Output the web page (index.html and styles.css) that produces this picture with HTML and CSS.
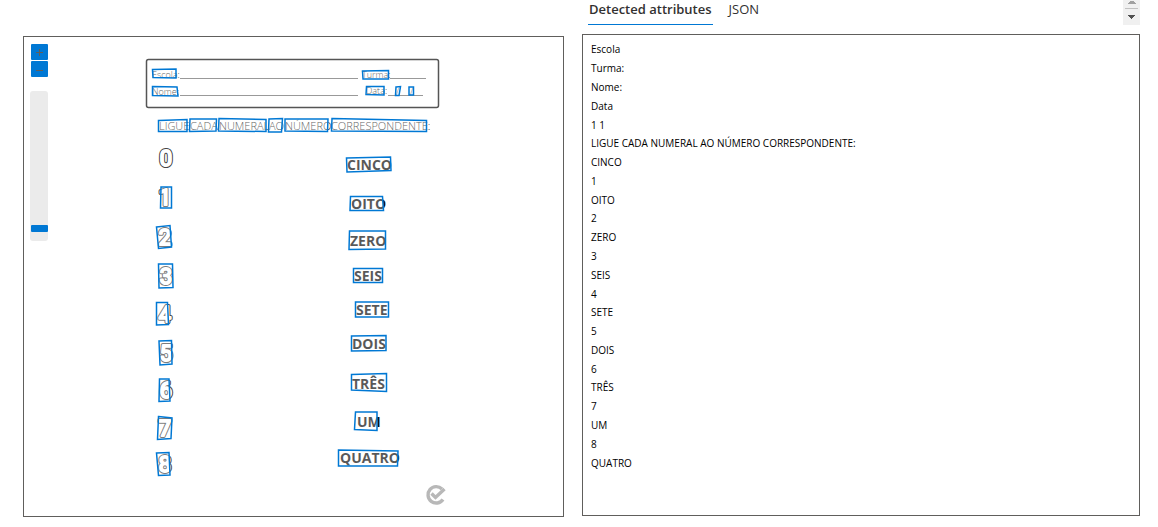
FILE: index.html
```html
<!DOCTYPE html>
<html lang="pt">
<head>
<meta charset="utf-8">
<title>Detected attributes</title>
<link rel="stylesheet" href="styles.css">
</head>
<body>
<main class="layout">
  <section class="viewer" aria-label="Document">
    <div class="controls">
      <div class="zoom">
        <button type="button" aria-label="Zoom in"><svg viewBox="0 0 17 16"><path d="M5 8.500h7M8.500 5v7"/></svg></button>
        <button type="button" aria-label="Zoom out"><svg viewBox="0 0 17 16"><path d="M5 9.500h7"/></svg></button>
      </div>
      <input class="slider" type="range" min="0" max="100" value="6" aria-label="Zoom level">
    </div>
    <svg class="sheet" viewBox="60 37 503 479" role="img" aria-label="Worksheet">
      <defs>
        <g id="digits">
          <text x="166" y="166">0</text><text x="165" y="205">1</text><text x="165" y="245">2</text>
          <text x="166" y="284">3</text><text x="165" y="322">4</text><text x="166" y="361">5</text>
          <text x="166" y="398">6</text><text x="165" y="436">7</text><text x="165" y="472">8</text>
        </g>
      </defs>
      <rect class="frame" x="146.500" y="59.500" width="292" height="48" rx="2"/>
      <path class="rule" d="M180 78.500H358M390 78.500H426M180 95.500H358M388 95.500H423"/>
      <g class="field">
        <text x="152" y="78">Escola:</text><text x="362" y="78">Turma:</text>
        <text x="152" y="95">Nome:</text><text x="366" y="94">Data:</text>
        <text x="396" y="95">/</text><text x="410" y="95">/</text>
      </g>
      <g class="heading">
        <text x="159" y="130">LIGUE</text><text x="190" y="130">CADA</text><text x="219" y="130">NUMERAL</text>
        <text x="269" y="130">AO</text><text x="285" y="130">NÚMERO</text><text x="331" y="130">CORRESPONDENTE:</text>
      </g>
      <use href="#digits" class="digit outline"/>
      <use href="#digits" class="digit inside"/>
      <g class="word">
        <text x="347" y="170">CINCO</text><text x="351" y="209">OITO</text><text x="350" y="246">ZERO</text>
        <text x="354" y="281">SEIS</text><text x="356" y="315">SETE</text><text x="352" y="349">DOIS</text>
        <text x="352" y="389">TRÊS</text><text x="357" y="427">UM</text><text x="340" y="463">QUATRO</text>
      </g>
      <g class="box">
        <path d="M152.500 69.500L176 69V78L153 77.500Z"/>
        <path d="M152.500 86.500L177 87L178 96L152.500 95.500Z"/>
        <path d="M362.500 71L388.500 70.500V79H363Z"/>
        <path d="M366.500 86.500H384V95L366 94.500Z"/>
        <path d="M396 87L400.500 86.500L399 95.500H395.500Z"/>
        <path d="M409 87H413.500V95H409Z"/>
        <path d="M158.500 120.500L187 119.500V131.500H158.500Z"/>
        <path d="M190 119H216.500L216 131L189.500 131.500Z"/>
        <path d="M219 118.500L266 119.500V131.500L218.500 131Z"/>
        <path d="M269 119L282.500 118.500L281.500 132H268.500Z"/>
        <path d="M285 119H328L327.500 131.500L285 131Z"/>
        <path d="M332 118.500L426.500 120.500V131.500L331.500 131Z"/>
        <path d="M161 187H171.500V208H160.500Z"/>
        <path d="M156.500 227L170 225.500L171.500 247L158.500 248.500Z"/>
        <path d="M158.500 264H172.500L173 287.500L159 288Z"/>
        <path d="M156.500 302.500H167.500L168.500 324.500L156.500 325Z"/>
        <path d="M159 341L171.500 340.500L172 364L160 365Z"/>
        <path d="M159.500 379H169L170 401L159 401.500Z"/>
        <path d="M158.500 416.500L172 418L171 438.500L157.500 439.500Z"/>
        <path d="M156.500 453L169 452.500L170 475L158.500 475.500Z"/>
        <path d="M346.500 158L390.500 157L391 170.500L347 172Z"/>
        <path d="M350.500 196.500H382.500L383.500 210.500H350Z"/>
        <path d="M349.500 231H385.500V249L349 249.500Z"/>
        <path d="M353.500 268.500H382.500V282.500H353.500Z"/>
        <path d="M355.500 302H388.500V317H355.500Z"/>
        <path d="M351.500 336L386 335.500V350.500L351.500 351Z"/>
        <path d="M351.500 374.500L386.500 373.500V391.500L351.500 390Z"/>
        <path d="M355.500 412H377V430.500L354.500 429.500Z"/>
        <path d="M338.500 450L398 451L397.500 466H338.500Z"/>
      </g>
      <path class="seal" d="M442 489A8.200 8.200 0 1 0 443 499.500"/>
      <path class="seal" d="M431.500 493.500L435.500 497.500L444.500 489"/>
    </svg>
  </section>
  <section class="results">
    <header class="bar">
      <nav class="tabs" role="tablist">
        <button type="button" class="tab selected" role="tab" aria-selected="true">Detected attributes</button>
        <button type="button" class="tab" role="tab" aria-selected="false">JSON</button>
      </nav>
      <div class="scroller">
        <button type="button" aria-label="Scroll up" class="up"><svg viewBox="0 0 17 8"><path d="M8 -1h2v1h1v1h1v1h1v1H5V2h1V1h1V0h1z"/></svg></button>
        <button type="button" aria-label="Scroll down" class="down"><svg viewBox="0 0 17 16"><path d="M5 6h7v1h-1v1h-1v1h-1v1H8V9H7V8H6V7H5z"/></svg></button>
      </div>
    </header>
    <ul class="lines">
      <li>Escola</li><li>Turma:</li><li>Nome:</li><li>Data</li><li>1 1</li>
      <li>LIGUE CADA NUMERAL AO NÚMERO CORRESPONDENTE:</li>
      <li>CINCO</li><li>1</li><li>OITO</li><li>2</li><li>ZERO</li><li>3</li><li>SEIS</li><li>4</li>
      <li>SETE</li><li>5</li><li>DOIS</li><li>6</li><li>TRÊS</li><li>7</li><li>UM</li><li>8</li><li>QUATRO</li>
    </ul>
  </section>
</main>
</body>
</html>
```
FILE: styles.css
```css
* { box-sizing: border-box; }
body { margin: 0; background: #fff; color: #000; font-family: "Open Sans", "Noto Sans", sans-serif; }
button { margin: 0; padding: 0; border: 0; font: inherit; }
.layout {
  display: grid;
  grid-template-columns: 541fr 558fr;
  gap: 18px;
  min-height: 100vh;
  padding: 0 18px 10px 23px;
}
.viewer { display: flex; align-items: flex-start; margin-top: 36px; border: 1px solid #605e5c; }
.controls { display: flex; flex-direction: column; gap: 14px; width: 36px; padding: 7px 0 0 6px; }
.zoom { display: flex; flex-direction: column; gap: 1px; width: 17px; margin-left: 1px; }
.zoom button { height: 16px; background: #0078d4; border-radius: 1px; }
.zoom svg { display: block; width: 17px; height: 16px; }
.zoom path { stroke: #605e5c; stroke-width: 1; fill: none; }
.slider {
  appearance: none;
  writing-mode: vertical-lr;
  direction: rtl;
  width: 18px;
  height: 150px;
  margin: 0;
  background: #ebebeb;
  border-radius: 3px;
}
.slider::-webkit-slider-thumb { appearance: none; width: 17px; height: 7px; background: #0078d4; border-radius: 1px; }
.sheet { flex: 1; min-width: 0; height: auto; }
.frame { fill: none; stroke: #555; stroke-width: 1.5; }
.rule { stroke: #999; fill: none; }
.field { font-size: 9px; font-weight: 300; fill: #222; }
.heading { font-size: 11px; font-weight: 300; fill: #222; }
.digit { font-family: Roboto, sans-serif; font-size: 22px; text-anchor: middle; stroke-linejoin: round; }
.outline { fill: #444; stroke: #444; stroke-width: 4; }
.inside { fill: #fff; stroke: #fff; stroke-width: 2; }
.word { font-size: 14px; font-weight: 700; fill: #111; }
.box { fill: #fff; fill-opacity: 0.3; stroke: #0078d4; stroke-width: 1.5; }
.seal { fill: none; stroke: #b8b8b8; stroke-width: 3.4; }
.results { display: flex; flex-direction: column; padding-bottom: 1px; }
.bar { display: flex; justify-content: space-between; align-items: flex-start; height: 34px; }
.tabs { display: flex; gap: 8px; padding-left: 6px; }
.tab { height: 25px; padding: 0 1px 6px; background: none; border-bottom: 1px solid transparent; font-size: 13px; line-height: 18px; color: #323130; }
.tab + .tab { padding: 0 8px 6px; }
.selected { border-color: #0078d4; font-weight: 600; }
.scroller { width: 17px; background: #f0f0f0; }
.scroller button { display: block; width: 17px; background: none; }
.scroller svg { display: block; width: 17px; }
.up { height: 9px; position: relative; }
.up::after { content: ""; position: absolute; left: 2px; right: 2px; bottom: 0; height: 1px; background: #c0c0c0; }
.up path { fill: #a0a0a0; }
.down { height: 16px; }
.down path { fill: #505050; }
.lines {
  flex: 1;
  display: grid;
  grid-auto-rows: 1fr;
  align-items: center;
  margin: 0;
  padding: 5px 8px 43px;
  border: 1px solid #605e5c;
  list-style: none;
  font-size: 10px;
  line-height: 16px;
}
```
